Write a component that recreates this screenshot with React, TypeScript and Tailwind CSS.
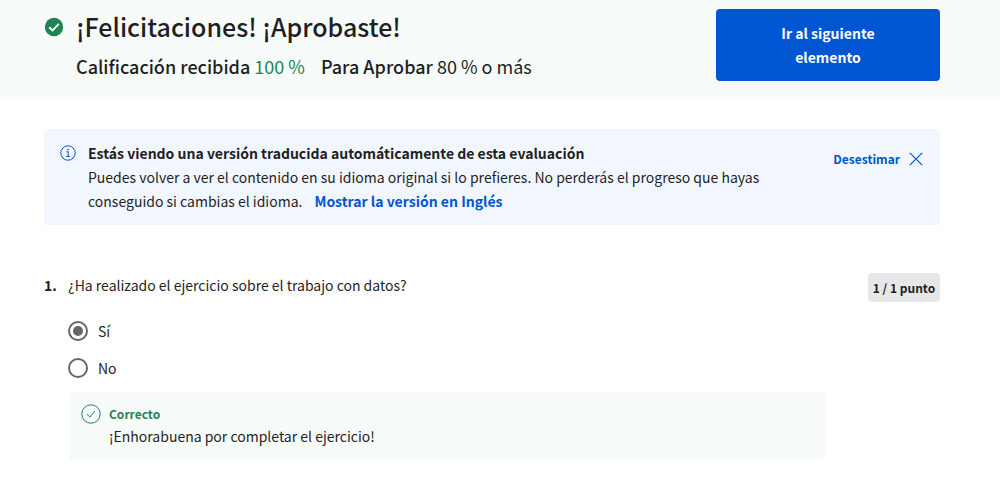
import { useState } from "react";

function PassedIcon() {
  return (
    <svg className="h-5 w-5 shrink-0" viewBox="0 0 20 20" fill="none" aria-hidden="true">
      <circle cx="10" cy="10" r="9.2" fill="#1f8354" />
      <path d="M5.2 10.2 8.6 13.4 14.8 6.8" stroke="#fff" strokeWidth="1.9" />
    </svg>
  );
}

function InfoIcon() {
  return (
    <svg className="h-4 w-4 shrink-0" viewBox="0 0 16 16" fill="none" stroke="#0056d2" aria-hidden="true">
      <circle cx="8" cy="8" r="7.2" strokeWidth="1" />
      <path d="M6.3 6.8h1.9v4.4M6 11.4h4.2" strokeWidth="1" />
      <circle cx="8" cy="4.6" r="0.85" fill="#0056d2" stroke="none" />
    </svg>
  );
}

function CloseIcon() {
  return (
    <svg className="h-4 w-4" viewBox="0 0 16 16" fill="none" stroke="#0056d2" strokeWidth="1.2" aria-hidden="true">
      <path d="M1.8 1.8 14.2 14.2M14.2 1.8 1.8 14.2" />
    </svg>
  );
}

function CorrectIcon() {
  return (
    <svg className="h-5 w-5 shrink-0" viewBox="0 0 20 20" fill="none" stroke="#1f8354" strokeWidth="1" aria-hidden="true">
      <circle cx="10" cy="10" r="9.2" />
      <path d="M6 10.2 8.9 13 13.8 7.2" />
    </svg>
  );
}

function ResultHeader() {
  return (
    <header className="flex items-start justify-between gap-8 bg-[#f7fbfa] pt-[9px] pr-15 pb-4 pl-11">
      <div className="flex gap-3">
        <div className="pt-2">
          <PassedIcon />
        </div>
        <div>
          <h1 className="text-[25px] leading-[34px] font-medium">¡Felicitaciones! ¡Aprobaste!</h1>
          <p className="mt-[9px] flex flex-wrap gap-x-4 text-lg leading-7">
            <span>
              <span className="font-medium">Calificación recibida</span>{" "}
              <span className="text-[#1f8354]">100 %</span>
            </span>
            <span>
              <span className="font-medium">Para Aprobar</span> 80 % o más
            </span>
          </p>
        </div>
      </div>
      <button
        type="button"
        className="w-56 shrink-0 rounded bg-[#0056d2] px-12 py-3 text-sm leading-6 font-bold text-white"
      >
        Ir al siguiente elemento
      </button>
    </header>
  );
}

function TranslationNotice({ onDismiss }: { onDismiss: () => void }) {
  return (
    <section className="flex items-start rounded bg-[#f2f7ff] px-4 py-3">
      <div className="pt-1">
        <InfoIcon />
      </div>
      <div className="ml-3 flex-1 text-sm leading-6">
        <h2 className="font-bold">Estás viendo una versión traducida automáticamente de esta evaluación</h2>
        <p>
          Puedes volver a ver el contenido en su idioma original si lo prefieres. No perderás el progreso que hayas
          conseguido si cambias el idioma.
          <a href="#en" className="ml-3 font-bold text-[#0056d2]">
            Mostrar la versión en Inglés
          </a>
        </p>
      </div>
      <button
        type="button"
        onClick={onDismiss}
        className="mt-2 ml-10 flex items-center gap-2 text-xs leading-5 font-bold text-[#0056d2]"
      >
        Desestimar
        <CloseIcon />
      </button>
    </section>
  );
}

const options = ["Sí", "No"];

function Question() {
  const [answer, setAnswer] = useState("Sí");
  return (
    <section className="mt-12 flex items-start text-sm leading-6">
      <span className="w-6 shrink-0 font-bold">1.</span>
      <div className="flex-1">
        <p id="question-1">¿Ha realizado el ejercicio sobre el trabajo con datos?</p>
        <div role="radiogroup" aria-labelledby="question-1" className="mt-[22px] flex flex-col gap-[13px]">
          {options.map((option) => (
            <label key={option} className="flex items-center gap-[10px]">
              <input
                type="radio"
                name="question-1"
                value={option}
                checked={answer === option}
                onChange={() => setAnswer(option)}
                className="grid h-5 w-5 appearance-none place-content-center rounded-full border-2 border-[#666] bg-white before:h-[10px] before:w-[10px] before:rounded-full checked:before:bg-[#666]"
              />
              {option}
            </label>
          ))}
        </div>
        <div className="mt-3 mr-[43px] ml-px flex gap-2 bg-[#f7fbfa] p-3">
          <CorrectIcon />
          <div>
            <p className="text-xs leading-5 font-bold text-[#1f8354]">Correcto</p>
            <p>¡Enhorabuena por completar el ejercicio!</p>
          </div>
        </div>
      </div>
      <span className="w-18 shrink-0 rounded bg-[#e5e7e8] py-[3px] text-center text-xs leading-[23px] font-bold">
        1 / 1 punto
      </span>
    </section>
  );
}

export default function App() {
  const [noticeOpen, setNoticeOpen] = useState(true);
  return (
    <div className="min-h-screen bg-white font-['Noto_Sans_CJK_SC',sans-serif] text-[#1f1f1f]">
      <ResultHeader />
      <main className="pt-8 pr-15 pb-10 pl-11">
        {noticeOpen && <TranslationNotice onDismiss={() => setNoticeOpen(false)} />}
        <Question />
      </main>
    </div>
  );
}
